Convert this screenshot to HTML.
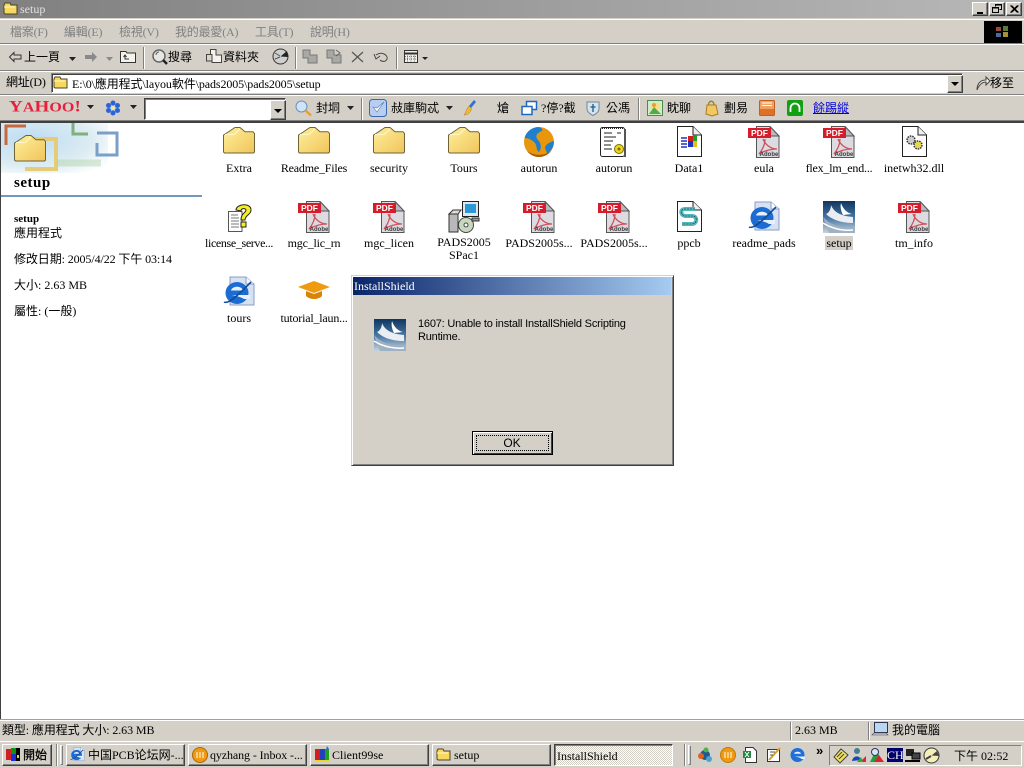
<!DOCTYPE html>
<html><head><meta charset="utf-8"><title>setup</title>
<style>
html,body{margin:0;padding:0;width:1024px;height:768px;overflow:hidden;background:#fff}
body{position:relative;font:12px/14px "Liberation Serif","Noto Sans CJK TC",serif;color:#000}
.a{position:absolute}
.t{position:absolute;white-space:nowrap;font:12px/14px "Liberation Serif","Noto Sans CJK TC",serif;color:#000}
.c{transform:translateX(-50%);text-align:center}
.n{letter-spacing:-.2px}
.m{color:#808080}
.b{position:absolute;background:#d4d0c8;box-sizing:border-box;border:1px solid;border-color:#fff #404040 #404040 #fff;box-shadow:inset -1px -1px 0 #808080}
.i{position:absolute;overflow:visible}
.v{position:absolute;width:2px;border-left:1px solid #808080;border-right:1px solid #fff;box-sizing:border-box}
.h1{position:absolute;left:0;width:1024px;height:1px;background:#808080}
.h2{position:absolute;left:0;width:1024px;height:1px;background:#fff}
.pt{font:bold 8.500px "Liberation Sans",sans-serif;fill:#fff;text-anchor:middle}
.at{font:bold 6px "Liberation Sans",sans-serif;fill:#3c3c3c;text-anchor:middle}
</style></head><body>
<svg width="0" height="0" style="position:absolute">
<defs>
<linearGradient id="fg" x1="0" y1="0" x2="1" y2="1"><stop offset="0" stop-color="#fff09c"/><stop offset="1" stop-color="#f0c45a"/></linearGradient>
<linearGradient id="sg" x1="0" y1="0" x2="0" y2="1"><stop offset="0" stop-color="#0f3560"/><stop offset=".55" stop-color="#4b7aa6"/><stop offset="1" stop-color="#c9d4dc"/></linearGradient>
<symbol id="folder" viewBox="0 0 32 32"><path d="M.5 9L3 7.500L12 1.500H17L22 5.700H30L31.500 7.500V26L30.500 27H1.500L.5 26Z" fill="url(#fg)" stroke="#6f6338"/><path d="M2 8.500H11L17 3" stroke="#fff8c8" fill="none"/></symbol>
<symbol id="mini" viewBox="0 0 16 16"><path d="M1 4L2 2H7L8 4H14V13H2L1 12Z" fill="#f7d860" stroke="#4d4420"/><path d="M1 6H12" stroke="#fff7c0"/></symbol>
<symbol id="pdf" viewBox="0 0 32 32"><path d="M8.500 .5H22L31 10V31.500H8.500Z" fill="#dcdbe2" stroke="#555"/><path d="M22 .5V10H31Z" fill="#b8b8c0" stroke="#555"/><path d="M15 13C17 18 22 23 29 23C24 23 18 24 11 28C15 23 17 18 17 13" fill="none" stroke="#d0505a" stroke-width="1.300"/><rect x="0" y="2" width="23" height="10" fill="#d41c2a"/></symbol>
<symbol id="ie" viewBox="0 0 32 32"><path d="M7 1H23L31 8V29H7Z" fill="#d6e2f4" stroke="#8a9ec4"/><path d="M23 1V8H31" fill="#f4f8ff" stroke="#8a9ec4"/><ellipse cx="14" cy="17" rx="11.500" ry="11" fill="#1c6cd2"/><path d="M8 14.500C9 9.500 19 9.500 20 14.500Z" fill="#e8f0fc"/><path d="M9 19H27V23H21C19 21.500 14 20 9 19Z" fill="#e8f0fc"/><path d="M1 26C6 29 20 14 28 6" fill="none" stroke="#134a98" stroke-width="1.600"/></symbol>
<symbol id="setup" viewBox="0 0 32 32"><rect width="32" height="32" fill="url(#sg)"/><path d="M8 4C11 12 19 15 30 16V22C17 22 8 18 3 13C6 12 8 8 8 4Z" fill="#e8eef2"/><path d="M18 2C20 8 24 12 29 13L20 14C18 10 17 6 18 2Z" fill="#fff"/><path d="M0 16C8 25 20 28 32 26V32H6Z" fill="#9fb2c4"/><path d="M0 22C8 27 18 30 30 29" fill="none" stroke="#fff" stroke-width="1.500"/></symbol>
</defs></svg>

<!-- chrome background -->
<div class="a" style="left:0;top:0;width:1024px;height:122px;background:#d4d0c8"></div>
<div class="a" style="left:0;top:0;width:1024px;height:18px;background:linear-gradient(90deg,#808080,#b8b8b8)"></div>
<svg class="i" style="left:3px;top:1px" width="16" height="16"><use href="#mini"/></svg>
<div class="t" style="left:20px;top:2px;color:#e0e0e0">setup</div>
<div class="b" style="left:972px;top:2px;width:16px;height:14px"><div class="a" style="left:4px;top:9px;width:6px;height:2px;background:#000"></div></div>
<div class="b" style="left:989px;top:2px;width:16px;height:14px"><svg class="i" style="left:2px;top:1px" width="11" height="10"><path d="M3.500 2.500V.5H9.500V5.500H7.500M.5 3.500H6.500V8.500H.5Z" fill="none" stroke="#000"/><path d="M3 1H10M0 4H7" stroke="#000"/></svg></div>
<div class="b" style="left:1006px;top:2px;width:16px;height:14px"><svg class="i" style="left:3px;top:2px" width="9" height="8"><path d="M.5 .5L7.500 7.500M7.500 .5L.5 7.500M1.500 .5L8.500 7.500M8.500 .5L1.500 7.500" stroke="#000"/></svg></div>

<div class="h2" style="top:19px"></div>
<div class="h1" style="top:43px"></div><div class="h2" style="top:44px"></div>
<div class="h1" style="top:70px"></div><div class="h2" style="top:71px"></div>
<div class="h1" style="top:94px"></div><div class="h2" style="top:95px"></div>
<div class="a" style="left:0;top:120px;width:1024px;height:1px;background:#808080"></div>
<div class="a" style="left:0;top:121px;width:1024px;height:2px;background:#404040"></div>

<!-- menu -->
<div class="t m n" style="left:10px;top:25px">檔案(F)</div>
<div class="t m n" style="left:64px;top:25px">編輯(E)</div>
<div class="t m n" style="left:119px;top:25px">檢視(V)</div>
<div class="t m n" style="left:175px;top:25px">我的最愛(A)</div>
<div class="t m n" style="left:255px;top:25px">工具(T)</div>
<div class="t m n" style="left:310px;top:25px">說明(H)</div>
<div class="a" style="left:984px;top:21px;width:38px;height:22px;background:#000"></div>
<svg class="i" style="left:995px;top:25px" width="16" height="14"><rect x="1" y="2" width="5" height="4" fill="#9a4a3a"/><rect x="8" y="1" width="5" height="5" fill="#5b7a3a"/><rect x="1" y="8" width="5" height="4" fill="#4a6a9a"/><rect x="8" y="7" width="5" height="5" fill="#a8903a"/></svg>

<!-- toolbar -->
<svg class="i" style="left:8px;top:51px" width="14" height="12"><path d="M6 1.500L1.500 6L6 10.500V8H13V4H6Z" fill="none" stroke="#333"/></svg>
<div class="t" style="left:24px;top:50px">上一頁</div>
<svg class="i" style="left:69px;top:57px" width="7" height="4"><path d="M0 0H7L3.500 4Z" fill="#222"/></svg>
<svg class="i" style="left:84px;top:51px" width="14" height="12"><path d="M8 1L13 6L8 11V8H1V4H8Z" fill="#8a8a8a"/></svg>
<svg class="i" style="left:106px;top:57px" width="7" height="4"><path d="M0 0H7L3.500 4Z" fill="#8a8a8a"/></svg>
<svg class="i" style="left:120px;top:49px" width="16" height="14"><path d="M.5 2.500H6L7 4H15.500V13.500H.5Z" fill="#f4f2ea" stroke="#333"/><path d="M6 11V7H10M8 5.500L10 7L8 8.500" fill="none" stroke="#333" transform="rotate(-90 7 9)"/></svg>
<div class="v" style="left:143px;top:47px;height:22px"></div>
<svg class="i" style="left:151px;top:48px" width="17" height="17"><circle cx="8" cy="8" r="6" fill="#e6e6e2" stroke="#666" stroke-width="1.500"/><path d="M12 12L16 16" stroke="#222" stroke-width="2.500"/><path d="M5 7A3 3 0 0 1 8 4" stroke="#555" fill="none"/></svg>
<div class="t" style="left:168px;top:50px">搜尋</div>
<svg class="i" style="left:206px;top:49px" width="16" height="15"><path d="M4.500 .5H10V6H15.500V13.500H6V7H4.500Z" fill="#f4f2ea" stroke="#444"/><path d="M.5 5.500H6V12H.5Z" fill="#d8d4c8" stroke="#444"/></svg>
<div class="t" style="left:223px;top:50px">資料夾</div>
<svg class="i" style="left:272px;top:48px" width="17" height="17"><circle cx="8.500" cy="8.500" r="7.500" fill="#cfcfcf" stroke="#333"/><path d="M8.500 8.500L15 3L16 9Z" fill="#222"/><path d="M3 5L8 8M3 11L8 9" stroke="#555"/></svg>
<div class="v" style="left:295px;top:47px;height:22px"></div>
<svg class="i" style="left:302px;top:49px" width="16" height="15"><path d="M1 1H8V6H15V14H6V9H1Z" fill="#a8a8a4" stroke="#777"/></svg>
<svg class="i" style="left:326px;top:49px" width="16" height="15"><path d="M1 1H8V6H15V14H6V9H1Z" fill="#a8a8a4" stroke="#777"/><path d="M10 1L14 4L10 7" stroke="#666" fill="none"/></svg>
<svg class="i" style="left:351px;top:51px" width="13" height="12"><path d="M1 1L12 11M12 1L1 11" stroke="#555" stroke-width="1.200"/></svg>
<svg class="i" style="left:373px;top:51px" width="16" height="12"><path d="M3 4C9 0 15 4 14 8C13 11 9 11 7 9M1 3L3 8L7 5" fill="none" stroke="#444"/></svg>
<div class="v" style="left:396px;top:47px;height:22px"></div>
<svg class="i" style="left:404px;top:50px" width="14" height="13"><rect x=".5" y=".5" width="13" height="12" fill="#f4f2ea" stroke="#333"/><path d="M0 3.500H14" stroke="#333" stroke-width="2"/><path d="M3.500 5.500V12M7 5.500V12M10.500 5.500V12M1 6.500H13M1 9H13" stroke="#777" stroke-dasharray="1 1"/></svg>
<svg class="i" style="left:422px;top:57px" width="6" height="3"><path d="M0 0H6L3 3Z" fill="#222"/></svg>

<!-- address -->
<div class="t n" style="left:6px;top:75px">網址(D)</div>
<div class="a" style="left:51px;top:73px;width:912px;height:20px;box-sizing:border-box;background:#fff;border:1px solid;border-color:#808080 #fff #fff #808080;box-shadow:inset 1px 1px 0 #404040"></div>
<svg class="i" style="left:53px;top:75px" width="16" height="16"><use href="#mini"/></svg>
<div class="t" style="left:72px;top:77px;letter-spacing:-.1px">E:\0\應用程式\layou軟件\pads2005\pads2005\setup</div>
<div class="b" style="left:947px;top:75px;width:16px;height:18px"><svg class="i" style="left:3px;top:6px" width="8" height="4"><path d="M0 0H8L4 4Z" fill="#000"/></svg></div>
<svg class="i" style="left:975px;top:75px" width="16" height="16"><path d="M2 15C2 8 6 5 11 5V2L15 6L11 10V7C7 7 4 10 2 15Z" fill="#f4f2ea" stroke="#444"/></svg>
<div class="t" style="left:990px;top:76px">移至</div>

<!-- yahoo -->
<div class="t" style="left:9px;top:97px;font:bold 19px/20px 'Liberation Serif',serif;color:#e8203c;letter-spacing:.1px;transform:scaleY(.85)">Y<span style="font-size:16px">A</span>H<span style="font-size:16px">OO</span>!</div>
<svg class="i" style="left:87px;top:105px" width="7" height="4"><path d="M0 0H7L3.500 4Z" fill="#222"/></svg>
<svg class="i" style="left:105px;top:100px" width="16" height="16"><circle cx="8" cy="8" r="3" fill="#9bc0f0"/><g fill="#2a62d8"><circle cx="8" cy="3" r="2.500"/><circle cx="8" cy="13" r="2.500"/><circle cx="3.500" cy="5.500" r="2.500"/><circle cx="12.500" cy="5.500" r="2.500"/><circle cx="3.500" cy="10.500" r="2.500"/><circle cx="12.500" cy="10.500" r="2.500"/></g><circle cx="8" cy="8" r="2" fill="#f2e6a0"/></svg>
<svg class="i" style="left:130px;top:105px" width="7" height="4"><path d="M0 0H7L3.500 4Z" fill="#222"/></svg>
<div class="a" style="left:144px;top:98px;width:142px;height:22px;box-sizing:border-box;background:#fff;border:1px solid;border-color:#404040 #fff #fff #404040;box-shadow:inset 1px 1px 0 #808080"></div>
<div class="b" style="left:270px;top:100px;width:16px;height:20px"><svg class="i" style="left:3px;top:8px" width="8" height="4"><path d="M0 0H8L4 4Z" fill="#000"/></svg></div>
<svg class="i" style="left:295px;top:100px" width="18" height="17"><circle cx="6.500" cy="6.500" r="5.500" fill="#cfe4f8" stroke="#7090b8"/><path d="M10.500 10.500L16 15.500" stroke="#e8a030" stroke-width="2.500"/></svg>
<div class="t" style="left:316px;top:101px">封垌</div>
<svg class="i" style="left:347px;top:106px" width="7" height="4"><path d="M0 0H7L3.500 4Z" fill="#222"/></svg>
<div class="v" style="left:361px;top:98px;height:22px"></div>
<svg class="i" style="left:369px;top:99px" width="18" height="18"><rect x=".5" y=".5" width="17" height="17" rx="3" fill="#b8cef0" stroke="#3868b0"/><path d="M4 8L8 13L15 3L8 9Z" fill="#fff" stroke="#5078a8" stroke-width=".6"/></svg>
<div class="t" style="left:391px;top:101px">敊庫駒忒</div>
<svg class="i" style="left:446px;top:106px" width="7" height="4"><path d="M0 0H7L3.500 4Z" fill="#222"/></svg>
<svg class="i" style="left:463px;top:99px" width="15" height="18"><path d="M11 1L13 3L8 9L6 7Z" fill="#3070d0"/><path d="M6 7L8.500 9.500C8 13 5 16 1 16C3 14 3 10 6 7Z" fill="#f0b838" stroke="#b08020" stroke-width=".5"/></svg>
<div class="t" style="left:497px;top:101px">熗</div>
<svg class="i" style="left:521px;top:100px" width="16" height="16"><rect x="5.500" y="1.500" width="10" height="8" fill="#fff" stroke="#1f68c0" stroke-width="1.500"/><rect x="1" y="6.500" width="10" height="8" fill="#fff" stroke="#1f68c0" stroke-width="1.500"/></svg>
<div class="t" style="left:541px;top:101px">?停?截</div>
<svg class="i" style="left:586px;top:100px" width="14" height="16"><path d="M1 2H13V9C13 12 10 14 7 15.500C4 14 1 12 1 9Z" fill="#d8e4ec" stroke="#7088a0"/><path d="M7 4V12M4.500 7H9.500" stroke="#306898" stroke-width="1.500"/></svg>
<div class="t" style="left:606px;top:101px">公馮</div>
<div class="v" style="left:638px;top:98px;height:22px"></div>
<svg class="i" style="left:647px;top:100px" width="16" height="16"><rect x=".5" y=".5" width="15" height="15" fill="#d0ecc8" stroke="#508850"/><rect x="4" y="3" width="9" height="6" fill="#f8e080"/><path d="M2 14L7 7L14 14Z" fill="#58a848"/><circle cx="7" cy="5" r="2" fill="#e8a030"/></svg>
<div class="t" style="left:667px;top:101px">眈聊</div>
<svg class="i" style="left:704px;top:99px" width="15" height="18"><path d="M3 6H12L14 15L8 17L2 15Z" fill="#f2c860" stroke="#a87c20"/><path d="M4.500 6C4.500 1 10 1 10 6" fill="none" stroke="#a87c20" stroke-width="1.500"/></svg>
<div class="t" style="left:724px;top:101px">劃易</div>
<svg class="i" style="left:759px;top:100px" width="16" height="16"><rect x=".5" y=".5" width="15" height="15" rx="1" fill="#f0a060" stroke="#c06020"/><path d="M3 3H13M3 5.500H13" stroke="#fff"/><rect x="1" y="9" width="14" height="6" fill="#e07028"/></svg>
<svg class="i" style="left:787px;top:100px" width="16" height="16"><rect width="16" height="16" rx="2" fill="#12a012"/><path d="M3.500 12V8A4.500 4.500 0 0 1 12.500 8V12" fill="none" stroke="#fff" stroke-width="1.800"/></svg>
<div class="t" style="left:813px;top:101px;color:#0000e0;text-decoration:underline">餘踢縱</div>

<!-- sidebar -->
<div class="a" style="left:0;top:123px;width:1px;height:596px;background:#404040"></div>
<div class="a" style="left:1px;top:123px;width:107px;height:50px;background:radial-gradient(ellipse at 28% 35%,#bcdcf4 0,#dcecf2 55%,#fff 88%)"></div>
<svg class="i" style="left:1px;top:123px" width="120" height="52">
<path d="M25 3H5V22" fill="none" stroke="#c8683c" stroke-width="3"/>
<path d="M25 16H55V46H24" fill="none" stroke="#e4cc78" stroke-width="4"/>
<path d="M72 0V11H87" fill="none" stroke="#7fae80" stroke-width="3"/>
<path d="M96 10H116V32H96V20" fill="none" stroke="#7b9fc6" stroke-width="3"/>
<path d="M56 40H100" stroke="#a8d0a0" stroke-width="7" opacity=".4"/>
</svg>
<svg class="i" style="left:14px;top:134px" width="32" height="32"><use href="#folder"/></svg>
<div class="t" style="left:14px;top:175px;font:bold 15px/16px 'Liberation Serif',serif;letter-spacing:.5px">setup</div>
<div class="a" style="left:1px;top:195px;width:201px;height:2px;background:#7398bb"></div>
<div class="t" style="left:14px;top:212px;font-weight:bold;font-size:11px">setup</div>
<div class="t" style="left:14px;top:226px">應用程式</div>
<div class="t" style="left:14px;top:252px;letter-spacing:-.1px">修改日期: 2005/4/22 下午 03:14</div>
<div class="t" style="left:14px;top:278px">大小: 2.63 MB</div>
<div class="t" style="left:14px;top:304px">屬性: (一般)</div>

<!-- files row 1 -->
<svg class="i" style="left:223px;top:126px" width="32" height="32"><use href="#folder"/></svg><div class="t c" style="left:239px;top:161px">Extra</div>
<svg class="i" style="left:298px;top:126px" width="32" height="32"><use href="#folder"/></svg><div class="t c n" style="left:314px;top:161px">Readme_Files</div>
<svg class="i" style="left:373px;top:126px" width="32" height="32"><use href="#folder"/></svg><div class="t c" style="left:389px;top:161px">security</div>
<svg class="i" style="left:448px;top:126px" width="32" height="32"><use href="#folder"/></svg><div class="t c" style="left:464px;top:161px">Tours</div>
<svg class="i" style="left:523px;top:126px" width="32" height="32"><circle cx="16" cy="16" r="15" fill="#e8960c"/><path d="M16 1A15 15 0 0 0 1.500 12C6 12 9 14 12 17C14 20 13 24 16 26C19 22 18 17 15 14C12 11 13 7 19 5C20 3.500 19 2 16 1Z" fill="#1f80d0"/><path d="M22 21C24 17 28 16 31 15C31 21 28 25 24 28C24 25 22 24 22 21Z" fill="#1f80d0"/><path d="M4 25A15 15 0 0 0 28 25C21 30 11 30 4 25Z" fill="#a85c08"/></svg><div class="t c" style="left:539px;top:161px">autorun</div>
<svg class="i" style="left:598px;top:126px" width="32" height="32"><rect x="2.500" y="1.500" width="24" height="29" rx="2" fill="#fff" stroke="#222"/><rect x="26" y="3" width="2" height="28" fill="#555"/><path d="M4 2.500H25" stroke="#222" stroke-dasharray="1 1"/><path d="M6 7H14M6 11H18M19 7H23M6 15H15M6 19H13M6 23H14" stroke="#222"/><circle cx="21" cy="23" r="4.500" fill="#e8d820" stroke="#806c00"/><circle cx="21" cy="23" r="1.500" fill="#806c00"/></svg><div class="t c" style="left:614px;top:161px">autorun</div>
<svg class="i" style="left:673px;top:126px" width="32" height="32"><path d="M4.500 .5H20L28.500 9V30.500H4.500Z" fill="#fff" stroke="#222"/><path d="M20 .5V9H28.500" fill="#eee" stroke="#222"/><rect x="15" y="10" width="5" height="5" fill="#d02020"/><rect x="20" y="9" width="4" height="6" fill="#20a020"/><rect x="15" y="15" width="5" height="6" fill="#2030c0"/><rect x="20" y="15" width="4" height="6" fill="#e0c020"/><path d="M8 12H14M8 15H14M8 18H14M8 21H14" stroke="#2030c0" stroke-width="1.500"/></svg><div class="t c" style="left:689px;top:161px">Data1</div>
<svg class="i" style="left:748px;top:126px" width="32" height="32"><use href="#pdf"/><text class="pt" x="11.500" y="10.200">PDF</text><text class="at" x="21" y="30">Adobe</text></svg><div class="t c" style="left:764px;top:161px">eula</div>
<svg class="i" style="left:823px;top:126px" width="32" height="32"><use href="#pdf"/><text class="pt" x="11.500" y="10.200">PDF</text><text class="at" x="21" y="30">Adobe</text></svg><div class="t c n" style="left:839px;top:161px">flex_lm_end...</div>
<svg class="i" style="left:898px;top:126px" width="32" height="32"><path d="M4.500 .5H20L28.500 9V30.500H4.500Z" fill="#fff" stroke="#222"/><path d="M20 .5V9H28.500" fill="#eee" stroke="#222"/><circle cx="13" cy="14" r="4" fill="#ccc" stroke="#333" stroke-width="1.500" stroke-dasharray="1.500 1"/><circle cx="20" cy="19" r="4" fill="#e8d850" stroke="#333" stroke-width="1.500" stroke-dasharray="1.500 1"/></svg><div class="t c" style="left:914px;top:161px">inetwh32.dll</div>

<!-- row 2 -->
<svg class="i" style="left:223px;top:201px" width="32" height="32"><path d="M5.500 10.500H19V30.500H5.500Z" fill="#fff" stroke="#555"/><path d="M8 14H15M8 17H16M8 20H16M8 23H16M8 26H16" stroke="#777"/><path d="M13 9C13 3 28 1 28 9C28 14 22 14 22 19H18C18 12 23 12 23 9C23 7 18 7 18 10Z" fill="#f4f020" stroke="#222"/><rect x="18" y="21" width="5" height="5" fill="#f4f020" stroke="#222"/></svg><div class="t c" style="left:239px;top:236px;letter-spacing:-.35px">license_serve...</div>
<svg class="i" style="left:298px;top:201px" width="32" height="32"><use href="#pdf"/><text class="pt" x="11.500" y="10.200">PDF</text><text class="at" x="21" y="30">Adobe</text></svg><div class="t c n" style="left:314px;top:236px">mgc_lic_rn</div>
<svg class="i" style="left:373px;top:201px" width="32" height="32"><use href="#pdf"/><text class="pt" x="11.500" y="10.200">PDF</text><text class="at" x="21" y="30">Adobe</text></svg><div class="t c" style="left:389px;top:236px">mgc_licen</div>
<svg class="i" style="left:448px;top:201px" width="32" height="32"><rect x="14.500" y=".5" width="16" height="15" fill="#dfe7ee" stroke="#222"/><rect x="17" y="3" width="11" height="9" fill="#2c98d8"/><path d="M1 13H10V31H1Z" fill="#b8b8b8" stroke="#333"/><path d="M1 13L5 9H13L10 13Z" fill="#ddd" stroke="#333"/><circle cx="18" cy="24" r="7.500" fill="#c8d8c0" stroke="#444"/><circle cx="18" cy="24" r="2" fill="#fff" stroke="#444"/><path d="M24 17H31V20H24Z" fill="#999" stroke="#333"/></svg><div class="t c" style="left:464px;top:236px;line-height:13px">PADS2005<br>SPac1</div>
<svg class="i" style="left:523px;top:201px" width="32" height="32"><use href="#pdf"/><text class="pt" x="11.500" y="10.200">PDF</text><text class="at" x="21" y="30">Adobe</text></svg><div class="t c" style="left:539px;top:236px">PADS2005s...</div>
<svg class="i" style="left:598px;top:201px" width="32" height="32"><use href="#pdf"/><text class="pt" x="11.500" y="10.200">PDF</text><text class="at" x="21" y="30">Adobe</text></svg><div class="t c" style="left:614px;top:236px">PADS2005s...</div>
<svg class="i" style="left:673px;top:201px" width="32" height="32"><path d="M4.500 .5H20L28.500 9V30.500H4.500Z" fill="#fff" stroke="#222"/><path d="M20 .5V9H28.500" fill="#eee" stroke="#222"/><path d="M22 8H12C7 8 7 14 12 15H20C25 16 24 23 19 23H9" fill="none" stroke="#55b8b8" stroke-width="4"/><path d="M22 8H12C7 8 7 14 12 15H20C25 16 24 23 19 23H9" fill="none" stroke="#224" stroke-width=".6" stroke-dasharray="2 1"/></svg><div class="t c" style="left:689px;top:236px">ppcb</div>
<svg class="i" style="left:748px;top:201px" width="32" height="32"><use href="#ie"/></svg><div class="t c" style="left:764px;top:236px">readme_pads</div>
<svg class="i" style="left:823px;top:201px" width="32" height="32"><use href="#setup"/></svg><div class="a" style="left:825px;top:236px;width:28px;height:14px;background:#d4d0c8"></div><div class="t c" style="left:839px;top:236px">setup</div>
<svg class="i" style="left:898px;top:201px" width="32" height="32"><use href="#pdf"/><text class="pt" x="11.500" y="10.200">PDF</text><text class="at" x="21" y="30">Adobe</text></svg><div class="t c" style="left:914px;top:236px">tm_info</div>

<!-- row 3 -->
<svg class="i" style="left:223px;top:276px" width="32" height="32"><use href="#ie"/></svg><div class="t c" style="left:239px;top:311px">tours</div>
<svg class="i" style="left:298px;top:280px" width="32" height="24"><path d="M0 7L16 1L32 7L16 13Z" fill="#f09a10"/><path d="M8 11V16C12 20 20 20 24 16V11L16 14Z" fill="#d88408"/></svg><div class="t c n" style="left:314px;top:311px">tutorial_laun...</div>

<!-- dialog -->
<div class="a" style="left:351px;top:275px;width:323px;height:191px;box-sizing:border-box;background:#d4d0c8;border:1px solid;border-color:#d4d0c8 #404040 #404040 #d4d0c8;box-shadow:inset 1px 1px 0 #fff,inset -1px -1px 0 #808080"></div>
<div class="a" style="left:353px;top:277px;width:318px;height:18px;background:linear-gradient(90deg,#0a246a,#a6caf0)"></div>
<div class="t" style="left:354px;top:279px;color:#fff">InstallShield</div>
<svg class="i" style="left:374px;top:319px" width="32" height="32"><use href="#setup"/></svg>
<div class="t" style="left:418px;top:318px;font:11px/13px 'Liberation Sans',sans-serif;letter-spacing:-.2px;width:220px;white-space:normal">1607: Unable to install InstallShield Scripting Runtime.</div>
<div class="a" style="left:472px;top:431px;width:81px;height:24px;box-sizing:border-box;border:1px solid #000;background:#d4d0c8;box-shadow:inset 1px 1px 0 #fff,inset -1px -1px 0 #404040"></div>
<div class="a" style="left:476px;top:435px;width:73px;height:16px;box-sizing:border-box;border:1px dotted #000"></div>
<div class="t c" style="left:512px;top:436px;font:12px/14px 'Liberation Sans',sans-serif">OK</div>

<!-- status -->
<div class="a" style="left:0;top:719px;width:1024px;height:23px;background:#d4d0c8"></div>
<div class="h1" style="top:719px;background:#a0a0a0"></div><div class="h2" style="top:720px"></div>
<div class="t" style="left:2px;top:723px;letter-spacing:-.1px">類型: 應用程式 大小: 2.63 MB</div>
<div class="v" style="left:790px;top:722px;height:18px"></div>
<div class="t" style="left:795px;top:723px">2.63 MB</div>
<div class="v" style="left:868px;top:722px;height:18px"></div>
<svg class="i" style="left:872px;top:722px" width="18" height="16"><rect x="2.500" y=".5" width="13" height="10" fill="#b8d8f0" stroke="#335"/><path d="M0 13H16L14 11H2Z" fill="#ccc" stroke="#445" stroke-width=".6"/></svg>
<div class="t" style="left:892px;top:723px">我的電腦</div>

<!-- taskbar -->
<div class="a" style="left:0;top:741px;width:1024px;height:27px;background:#d4d0c8;border-top:1px solid #fff;box-sizing:border-box"></div>
<div class="b" style="left:2px;top:744px;width:50px;height:22px"></div>
<svg class="i" style="left:5px;top:747px" width="16" height="15"><rect x="1" y="2" width="5" height="11" fill="#d02020"/><rect x="6" y="1" width="5" height="6" fill="#109010"/><rect x="6" y="7" width="5" height="7" fill="#2030d0"/><rect x="11" y="1" width="4" height="13" fill="#000"/><rect x="12" y="8" width="2" height="3" fill="#e8d820"/></svg>
<div class="t" style="left:23px;top:748px;font-size:12px;-webkit-text-stroke:.3px #000">開始</div>
<div class="v" style="left:56px;top:744px;height:22px"></div>
<div class="b" style="left:60px;top:745px;width:3px;height:20px;box-shadow:none;border-color:#fff #808080 #808080 #fff"></div>
<div class="b" style="left:66px;top:744px;width:119px;height:22px"></div>
<svg class="i" style="left:70px;top:747px" width="15" height="15" viewBox="0 0 32 32"><use href="#ie"/></svg>
<div class="t" style="left:88px;top:748px">中国PCB论坛网-...</div>
<div class="b" style="left:188px;top:744px;width:119px;height:22px"></div>
<svg class="i" style="left:192px;top:747px" width="16" height="16"><circle cx="8" cy="8" r="7.500" fill="#f09a10" stroke="#a86808"/><path d="M5 5V11M8 5V11M11 5V11" stroke="#fff"/></svg>
<div class="t" style="left:210px;top:748px;letter-spacing:-.1px">qyzhang - Inbox -...</div>
<div class="b" style="left:310px;top:744px;width:119px;height:22px"></div>
<svg class="i" style="left:314px;top:746px" width="17" height="17"><rect x="1" y="3" width="5" height="12" fill="#d02020"/><rect x="6" y="3" width="5" height="12" fill="#2040c0"/><rect x="11" y="3" width="4" height="12" fill="#20a020"/><rect x="1" y="14" width="14" height="2" fill="#e8d820"/><path d="M13 0L15 3L12 4Z" fill="#3060e0"/></svg>
<div class="t" style="left:332px;top:748px">Client99se</div>
<div class="b" style="left:432px;top:744px;width:119px;height:22px"></div>
<svg class="i" style="left:436px;top:747px" width="16" height="16"><use href="#mini"/></svg>
<div class="t" style="left:454px;top:748px">setup</div>
<div class="a" style="left:554px;top:744px;width:119px;height:22px;box-sizing:border-box;border:1px solid;border-color:#404040 #fff #fff #404040;box-shadow:inset 1px 1px 0 #808080;background-color:#eeeeee;background-image:repeating-conic-gradient(#fff 0 25%,#d4d0c8 0 50%);background-size:2px 2px"></div>
<div class="t" style="left:557px;top:749px">InstallShield</div>
<div class="v" style="left:684px;top:744px;height:22px"></div>
<div class="b" style="left:688px;top:745px;width:3px;height:20px;box-shadow:none;border-color:#fff #808080 #808080 #fff"></div>
<svg class="i" style="left:697px;top:747px" width="16" height="16"><circle cx="8" cy="8" r="5" fill="#205890"/><circle cx="4" cy="9" r="3" fill="#e06020"/><circle cx="12" cy="12" r="3" fill="#50a0d0"/><circle cx="9" cy="3" r="2.500" fill="#50b050"/></svg>
<svg class="i" style="left:720px;top:747px" width="16" height="16"><circle cx="8" cy="8" r="7.500" fill="#f09a10" stroke="#c07808"/><path d="M5 5V11M8 5V11M11 5V11" stroke="#fff"/></svg>
<svg class="i" style="left:742px;top:747px" width="16" height="16"><path d="M3.500 .5H11L14.500 4V15.500H3.500Z" fill="#fff" stroke="#333"/><path d="M1 4H9V11H1Z" fill="#1f8a3c"/><path d="M3 5L7 10M7 5L3 10" stroke="#fff"/></svg>
<svg class="i" style="left:766px;top:747px" width="16" height="16"><rect x="1.500" y="2.500" width="12" height="12" fill="#fff" stroke="#333"/><path d="M3 13L14 1" stroke="#d8a020" stroke-width="2"/><path d="M4 5H9M4 8H7" stroke="#555"/></svg>
<svg class="i" style="left:790px;top:747px" width="16" height="16" viewBox="0 0 32 32"><ellipse cx="15" cy="16" rx="14" ry="14" fill="#2070d8"/><path d="M8 13.500C9 8 21 8 22 13.500Z" fill="#e8f0fc"/><path d="M9 19H30V24H23C20 21 15 20 9 19Z" fill="#e8f0fc"/></svg>
<div class="t" style="left:816px;top:745px;font:bold 13px/12px 'Liberation Sans',sans-serif">»</div>
<div class="a" style="left:829px;top:745px;width:193px;height:21px;box-sizing:border-box;border:1px solid;border-color:#808080 #fff #fff #808080"></div>
<svg class="i" style="left:833px;top:748px" width="16" height="16"><path d="M1 9L8 1L15 7L7 15Z" fill="#f0e060" stroke="#444"/><path d="M4 9L9 4M6 11L11 6" stroke="#444"/></svg>
<svg class="i" style="left:851px;top:747px" width="16" height="16"><circle cx="6" cy="4" r="3" fill="#408090"/><path d="M1 14C2 8 9 8 10 13Z" fill="#2040c0"/><path d="M9 15L15 9V15Z" fill="#e02040"/><path d="M6 15L10 10L12 15Z" fill="#20b030"/></svg>
<svg class="i" style="left:869px;top:747px" width="16" height="16"><path d="M1 15L7 3L14 15Z" fill="#20a040"/><path d="M5 15L10 8L15 15Z" fill="#e02030"/><circle cx="6" cy="5" r="3.500" fill="#d0e8f8" stroke="#335"/></svg>
<div class="a" style="left:887px;top:748px;width:16px;height:14px;background:#00006c;color:#fff;font:12px/14px 'Liberation Serif',serif;text-align:center">CH</div>
<svg class="i" style="left:905px;top:748px" width="16" height="15"><rect x="1" y="1" width="8" height="7" fill="#222"/><rect x="7" y="5" width="8" height="6" fill="#444" stroke="#000"/><path d="M0 13H15" stroke="#000" stroke-width="2"/></svg>
<svg class="i" style="left:923px;top:747px" width="17" height="17"><circle cx="8.500" cy="8.500" r="7.500" fill="#f4f0b8" stroke="#333"/><path d="M8.500 8.500L14 4L16 9Z" fill="#444"/><path d="M3 12L8 9" stroke="#444" stroke-width="2"/></svg>
<div class="t" style="left:954px;top:749px">下午 02:52</div>
</body></html>
